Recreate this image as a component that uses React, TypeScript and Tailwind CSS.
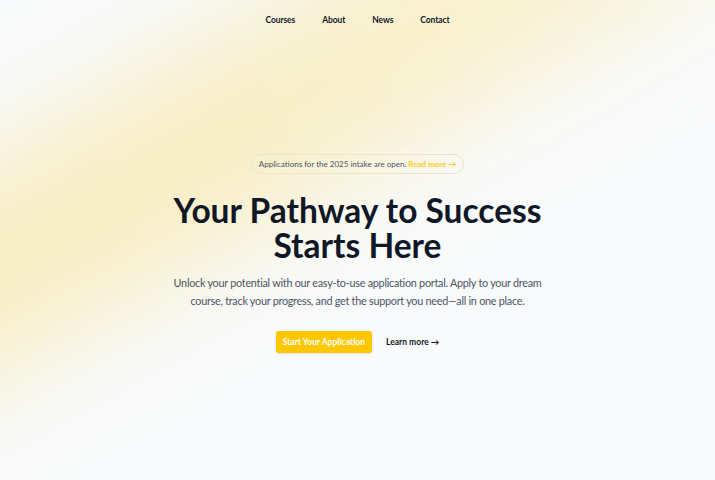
import React from 'react';

const navItems = ['Courses', 'About', 'News', 'Contact'];

export default function App() {
  return (
    <div className="relative min-h-[480px] w-full overflow-hidden bg-gray-50 font-['Lato',sans-serif]">
      {/* Decorative blurred blob */}
      <div
        aria-hidden="true"
        className="pointer-events-none absolute left-[-260px] top-[35px] h-[190px] w-[1000px] rotate-[-29deg] bg-gradient-to-r from-[#f8eec3] via-[#f8eec5] to-[#faf3d6] blur-[50px]"
      />

      <div className="relative flex flex-col items-center">
        {/* Nav */}
        <nav className="flex items-center gap-[27px] pt-[14px] text-[8.5px] font-bold tracking-[-0.1px] text-gray-900">
          {navItems.map((item) => (
            <a key={item} href="#" className="leading-[12px]">
              {item}
            </a>
          ))}
        </nav>

        {/* Hero */}
        <div className="mt-[128px] flex flex-col items-center">
          <div className="rounded-full border border-[#ece5cc] px-[7px] py-[3.5px] text-[8px] leading-[11px] text-gray-600">
            Applications for the 2025 intake are open.{' '}
            <a href="#" className="font-semibold text-yellow-400">
              Read more →
            </a>
          </div>

          <h1 className="mt-[19px] text-center text-[33.5px] font-bold leading-[35px] text-gray-900">
            Your Pathway to Success
            <br />
            Starts Here
          </h1>

          <p className="mt-[11px] w-[380px] text-center text-[10.8px] leading-[18px] tracking-[-0.25px] text-gray-600">
            Unlock your potential with our easy-to-use application portal. Apply to your dream course, track your
            progress, and get the support you need—all in one place.
          </p>

          <div className="mt-[21px] flex items-center gap-[14px]">
            <a
              href="#"
              className="rounded-[3px] bg-yellow-400 px-[7px] py-[5px] text-[8.5px] font-bold leading-[12px] text-white shadow-sm"
            >
              Start Your Application
            </a>
            <a href="#" className="text-[8.5px] font-bold leading-[12px] text-gray-900">
              Learn more →
            </a>
          </div>
        </div>
      </div>
    </div>
  );
}
